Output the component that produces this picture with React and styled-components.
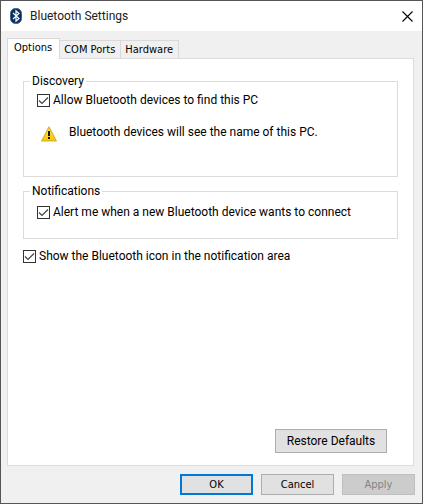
import * as React from "react";
import styled, { createGlobalStyle } from "styled-components";

const tabs = ["Options", "COM Ports", "Hardware"];

function BluetoothIcon() {
  return (
    <svg width="14" height="16" viewBox="0 0 14 16" aria-hidden="true">
      <rect x="1.5" y="0.5" width="11" height="15" rx="5" fill="#06305f" stroke="#3d5f8c" />
      <path
        d="M4 5l6 5.5L7 13.2V2.8L10 5.5 4 11"
        fill="none"
        stroke="#fff"
        strokeWidth="1.2"
      />
    </svg>
  );
}

function CloseIcon() {
  return (
    <svg width="11" height="11" viewBox="0 0 11 11" aria-hidden="true">
      <path d="M0.5 0.5l10 10M10.5 0.5l-10 10" stroke="#000" strokeWidth="1.1" />
    </svg>
  );
}

function WarningIcon() {
  return (
    <svg width="16" height="16" viewBox="0 0 16 16" aria-hidden="true">
      <defs>
        <linearGradient id="warn" x1="0" y1="0" x2="0" y2="1">
          <stop offset="0" stopColor="#fff04a" />
          <stop offset="1" stopColor="#f5c400" />
        </linearGradient>
      </defs>
      <path
        d="M8 1L15.3 15H0.7z"
        fill="url(#warn)"
        stroke="#d9b02c"
        strokeWidth="1.2"
        strokeLinejoin="round"
      />
      <path d="M7 5h2v5H7zM7 11h2v2H7z" fill="#111" />
    </svg>
  );
}

function Check({ children }) {
  const [checked, setChecked] = React.useState(true);

  return (
    <CheckLabel>
      <CheckBox>
        <CheckInput
          type="checkbox"
          checked={checked}
          onChange={(e) => setChecked(e.target.checked)}
        />
        {checked && (
          <Tick width="13" height="13" viewBox="0 0 13 13" aria-hidden="true">
            <path d="M2 6.5l3 3 6-6" fill="none" stroke="#444" strokeWidth="1.2" />
          </Tick>
        )}
      </CheckBox>
      <span>{children}</span>
    </CheckLabel>
  );
}

function App() {
  const [active, setActive] = React.useState("Options");

  return (
    <Window>
      <GlobalStyle />
      <TitleBar>
        <BluetoothIcon />
        <Title>Bluetooth Settings</Title>
        <CloseButton type="button" aria-label="Close">
          <CloseIcon />
        </CloseButton>
      </TitleBar>
      <Body>
        <TabList role="tablist">
          {tabs.map((tab) => (
            <Tab
              key={tab}
              type="button"
              role="tab"
              aria-selected={active === tab}
              $active={active === tab}
              onClick={() => setActive(tab)}
            >
              {tab}
            </Tab>
          ))}
        </TabList>
        <Panel role="tabpanel">
          <Group $tall>
            <Legend>Discovery</Legend>
            <Check>Allow Bluetooth devices to find this PC</Check>
            <Warning>
              <WarningIcon />
              <span>Bluetooth devices will see the name of this PC.</span>
            </Warning>
          </Group>
          <Group>
            <Legend>Notifications</Legend>
            <Check>Alert me when a new Bluetooth device wants to connect</Check>
          </Group>
          <Check>Show the Bluetooth icon in the notification area</Check>
          <RestoreButton type="button">Restore Defaults</RestoreButton>
        </Panel>
        <Footer>
          <FooterButton type="button" $primary>
            OK
          </FooterButton>
          <FooterButton type="button">Cancel</FooterButton>
          <FooterButton type="button" disabled>
            Apply
          </FooterButton>
        </Footer>
      </Body>
    </Window>
  );
}

const GlobalStyle = createGlobalStyle`
  * {
    box-sizing: border-box;
  }
  body {
    margin: 0;
    color: #000;
    font: 12px/16px Roboto, "Open Sans", sans-serif;
  }
`;

const Window = styled.div`
  display: flex;
  flex-direction: column;
  min-height: 100vh;
  border: 1px solid #555;
  background-color: #f0f0f0;
`;

const TitleBar = styled.header`
  display: flex;
  align-items: center;
  height: 30px;
  padding: 0 9px 0 8px;
  background-color: #fff;
`;

const Title = styled.h1`
  flex: 1;
  margin: 0 0 0 7px;
  color: #222;
  font-size: 12px;
  font-weight: 400;
`;

const CloseButton = styled.button`
  display: flex;
  padding: 0;
  border: none;
  background: none;
`;

const Body = styled.main`
  display: flex;
  flex: 1;
  flex-direction: column;
  padding: 7px 7px 8px 6px;
`;

const TabList = styled.div`
  display: flex;
  align-items: flex-end;
  height: 20px;
`;

/* the active tab hangs over the panel's top border */
const Tab = styled.button`
  position: relative;
  height: ${(props) => (props.$active ? "21px" : "18px")};
  margin-bottom: ${(props) => (props.$active ? "-1px" : "0")};
  padding: ${(props) => (props.$active ? "0 7px 2px 6px" : "0 5px 0 4px")};
  border: 1px solid #d9d9d9;
  border-bottom: none;
  border-left-width: ${(props) => (props.$active ? "1px" : "0")};
  background-color: ${(props) => (props.$active ? "#fff" : "#f0f0f0")};
  color: #000;
  white-space: nowrap;
  font: 11px/16px "DejaVu Sans Condensed", "Noto Sans", sans-serif;
`;

const Panel = styled.section`
  display: flex;
  flex: 1;
  flex-direction: column;
  margin-right: 1px;
  padding: 14px 15px 12px;
  border: 1px solid #dcdcdc;
  background-color: #fff;
`;

const Group = styled.fieldset`
  min-width: 0;
  height: ${(props) => (props.$tall ? "104px" : "56px")};
  margin: 0 0 ${(props) => (props.$tall ? "6px" : "9px")};
  padding: ${(props) => (props.$tall ? "3px" : "5px")} 13px 0;
  border: 1px solid #dcdcdc;
`;

const Legend = styled.legend`
  margin-left: -7px;
  padding: 0 2px;
`;

const CheckLabel = styled.label`
  display: flex;
  align-items: center;
  gap: 3px;
  white-space: nowrap;
`;

const CheckBox = styled.span`
  display: grid;
  width: 13px;
  height: 13px;
`;

const CheckInput = styled.input`
  grid-area: 1 / 1;
  width: 13px;
  height: 13px;
  margin: 0;
  border: 1px solid #333;
  background-color: #fff;
  appearance: none;
`;

const Tick = styled.svg`
  grid-area: 1 / 1;
  pointer-events: none;
`;

const Warning = styled.div`
  display: flex;
  align-items: flex-start;
  gap: 12px;
  margin: 16px 0 0 4px;
  white-space: nowrap;

  svg {
    margin-top: 2px;
  }
`;

const Button = styled.button`
  padding: 0;
  border: 1px solid #adadad;
  background-color: #e1e1e1;
  color: #000;
  font: inherit;
`;

const RestoreButton = styled(Button)`
  align-self: flex-end;
  width: 112px;
  height: 24px;
  margin: auto 11px 0 0;
`;

const Footer = styled.footer`
  display: flex;
  justify-content: flex-end;
  gap: 8px;
  margin-top: 8px;
`;

const FooterButton = styled(Button)`
  width: 73px;
  height: 21px;
  border: ${(props) => (props.$primary ? "2px solid #0078d7" : "1px solid #adadad")};
  font: 11px/16px "DejaVu Sans Condensed", "Noto Sans", sans-serif;

  &:disabled {
    border-color: #bfbfbf;
    background-color: #ccc;
    color: #838383;
  }
`;

export default App;
